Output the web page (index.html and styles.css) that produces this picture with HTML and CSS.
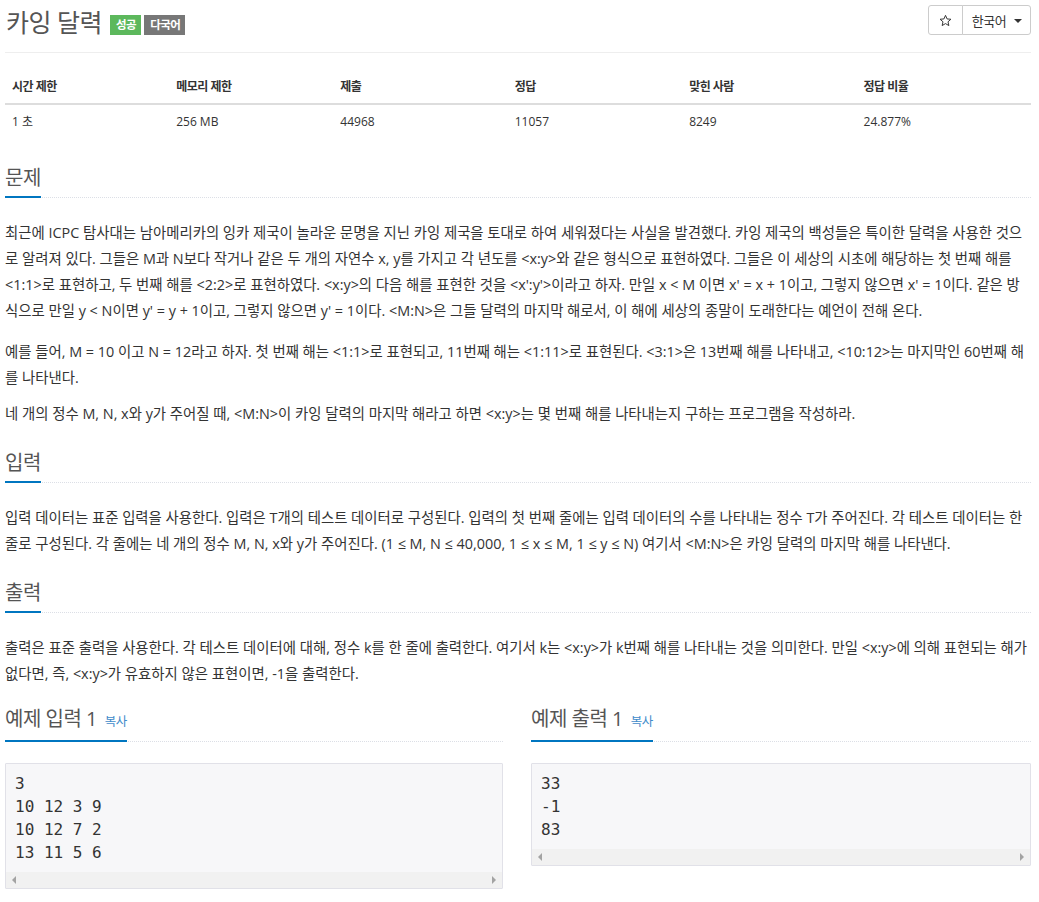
FILE: index.html
```html
<!DOCTYPE html>
<html lang="ko">
<head>
<meta charset="utf-8">
<title>카잉 달력</title>
<link rel="stylesheet" href="styles.css">
</head>
<body>
<div class="container">
  <div class="page-header">
    <h1 class="title"><span class="title-text">카잉 달력</span><span class="label label-success">성공</span><span class="label label-default">다국어</span></h1>
    <div class="btn-group">
      <button class="btn btn-star"><svg width="13" height="13" viewBox="0 0 24 24"><path d="M12 2.5l2.9 6.6 7.1.6-5.4 4.7 1.6 7-6.2-3.7-6.2 3.7 1.6-7L2 9.7l7.1-.6z" fill="none" stroke="#333" stroke-width="1.8" stroke-linejoin="round"/></svg></button>
      <button class="btn btn-lang">한국어 <span class="caret"></span></button>
    </div>
  </div>

  <table class="info-table">
    <thead>
      <tr><th class="w16">시간 제한</th><th class="w16">메모리 제한</th><th class="w17">제출</th><th class="w17">정답</th><th class="w17">맞힌 사람</th><th class="w17">정답 비율</th></tr>
    </thead>
    <tbody>
      <tr><td>1 초</td><td>256 MB</td><td>44968</td><td>11057</td><td>8249</td><td>24.877%</td></tr>
    </tbody>
  </table>

  <section class="problem-section">
    <div class="headline"><h2>문제</h2></div>
    <div class="problem-text">
      <p>최근에 ICPC 탐사대는 남아메리카의 잉카 제국이 놀라운 문명을 지닌 카잉 제국을 토대로 하여 세워졌다는 사실을 발견했다. 카잉 제국의 백성들은 특이한 달력을 사용한 것으로 알려져 있다. 그들은 M과 N보다 작거나 같은 두 개의 자연수 x, y를 가지고 각 년도를 &lt;x:y&gt;와 같은 형식으로 표현하였다. 그들은 이 세상의 시초에 해당하는 첫 번째 해를 &lt;1:1&gt;로 표현하고, 두 번째 해를 &lt;2:2&gt;로 표현하였다. &lt;x:y&gt;의 다음 해를 표현한 것을 &lt;x':y'&gt;이라고 하자. 만일 x &lt; M 이면 x' = x + 1이고, 그렇지 않으면 x' = 1이다. 같은 방식으로 만일 y &lt; N이면 y' = y + 1이고, 그렇지 않으면 y' = 1이다. &lt;M:N&gt;은 그들 달력의 마지막 해로서, 이 해에 세상의 종말이 도래한다는 예언이 전해 온다.</p>
      <p>예를 들어, M = 10 이고 N = 12라고 하자. 첫 번째 해는 &lt;1:1&gt;로 표현되고, 11번째 해는 &lt;1:11&gt;로 표현된다. &lt;3:1&gt;은 13번째 해를 나타내고, &lt;10:12&gt;는 마지막인 60번째 해를 나타낸다.</p>
      <p>네 개의 정수 M, N, x와 y가 주어질 때, &lt;M:N&gt;이 카잉 달력의 마지막 해라고 하면 &lt;x:y&gt;는 몇 번째 해를 나타내는지 구하는 프로그램을 작성하라.</p>
    </div>
  </section>

  <section class="problem-section">
    <div class="headline"><h2>입력</h2></div>
    <div class="problem-text">
      <p>입력 데이터는 표준 입력을 사용한다. 입력은 T개의 테스트 데이터로 구성된다. 입력의 첫 번째 줄에는 입력 데이터의 수를 나타내는 정수 T가 주어진다. 각 테스트 데이터는 한 줄로 구성된다. 각 줄에는 네 개의 정수 M, N, x와 y가 주어진다. (1 ≤ M, N ≤ 40,000, 1 ≤ x ≤ M, 1 ≤ y ≤ N) 여기서 &lt;M:N&gt;은 카잉 달력의 마지막 해를 나타낸다.</p>
    </div>
  </section>

  <section class="problem-section">
    <div class="headline"><h2>출력</h2></div>
    <div class="problem-text">
      <p>출력은 표준 출력을 사용한다. 각 테스트 데이터에 대해, 정수 k를 한 줄에 출력한다. 여기서 k는 &lt;x:y&gt;가 k번째 해를 나타내는 것을 의미한다. 만일 &lt;x:y&gt;에 의해 표현되는 해가 없다면, 즉, &lt;x:y&gt;가 유효하지 않은 표현이면, -1을 출력한다.</p>
    </div>
  </section>

  <div class="samples">
    <section class="sample">
      <div class="headline"><h2>예제 입력 1 <a class="copy">복사</a></h2></div>
      <div class="sample-box">
        <pre class="sampledata">3
10 12 3 9
10 12 7 2
13 11 5 6</pre>
        <div class="hscroll"><span class="arrow-left"></span><span class="arrow-right"></span></div>
      </div>
    </section>
    <section class="sample">
      <div class="headline"><h2>예제 출력 1 <a class="copy">복사</a></h2></div>
      <div class="sample-box">
        <pre class="sampledata">33
-1
83</pre>
        <div class="hscroll"><span class="arrow-left"></span><span class="arrow-right"></span></div>
      </div>
    </section>
  </div>
</div>
</body>
</html>
```
FILE: styles.css
```css
* { box-sizing: border-box; }
html, body { margin: 0; padding: 0; background: #fff; }
body {
  font-family: "Open Sans", "Noto Sans CJK KR", sans-serif;
  font-size: 14px;
  color: #333;
}
.container { padding: 0 8px 0 5px; }

/* header */
.page-header {
  display: flex;
  justify-content: space-between;
  align-items: flex-start;
  padding-top: 5px;
  height: 53px;
  border-bottom: 1px solid #eee;
}
.title {
  display: flex;
  align-items: flex-start;
  margin: 0;
  font-weight: normal;
}
.title-text {
  font-size: 25px;
  line-height: 34px;
  letter-spacing: -0.5px;
  color: #555;
  padding-left: 1px;
}
.label {
  display: inline-block;
  height: 20px;
  line-height: 20px;
  margin-top: 10px;
  padding: 0 5px 0 6px;
  font-size: 11.5px;
  font-weight: bold;
  letter-spacing: -0.5px;
  color: #fff;
}
.label-success { background: #5cb85c; margin-left: 8px; }
.label-default { background: #777; margin-left: 3px; }

.btn-group { display: flex; }
.btn {
  height: 30px;
  background: #fff;
  border: 1px solid #ccc;
  font-family: inherit;
  font-size: 13px;
  color: #333;
  padding: 0;
  display: flex;
  align-items: center;
  justify-content: center;
}
.btn-star { width: 35px; border-radius: 3px 0 0 3px; }
.btn-lang {
  width: 69px;
  margin-left: -1px;
  border-radius: 0 3px 3px 0;
  letter-spacing: -0.5px;
  gap: 8px;
  padding-left: 1px;
}
.caret {
  display: inline-block;
  width: 0;
  height: 0;
  border-left: 4px solid transparent;
  border-right: 4px solid transparent;
  border-top: 4px solid #333;
  margin-top: 2px;
}

/* table */
.info-table {
  width: 100%;
  border-collapse: collapse;
  margin-top: 16px;
  font-size: 12px;
}
.info-table th, .info-table td {
  text-align: left;
  padding: 8px 7px;
  line-height: 17px;
}
.info-table th {
  padding-top: 9px;
  font-weight: bold;
  letter-spacing: -0.5px;
  border-bottom: 2px solid #ddd;
}
.w16 { width: 16%; }
.w17 { width: 17%; }

/* sections */
.problem-section { margin-top: 27px; }
.problem-section + .problem-section { margin-top: 23px; }
.headline {
  display: flex;
  border-bottom: 1px dotted #dcdfe6;
  margin-bottom: 22px;
}
.headline h2 {
  margin: 0 0 -1px;
  font-size: 20px;
  line-height: 26px;
  font-weight: normal;
  letter-spacing: -0.5px;
  color: #555;
  padding-bottom: 5px;
  border-bottom: 2px solid #0076c0;
}
.problem-text p {
  margin: 0 0 10px;
  font-size: 14.4px;
  line-height: 26px;
}
.problem-text p:first-child { margin-bottom: 15px; }
.problem-text p:last-child { margin-bottom: 0; }

/* samples */
.samples {
  display: grid;
  grid-template-columns: 498px 500px;
  column-gap: 28px;
  margin-top: 19px;
}
.sample .headline { margin-bottom: 21px; }
.copy {
  font-size: 12.5px;
  letter-spacing: -0.3px;
  color: #428bca;
  margin-left: 3px;
}
.sample-box {
  border: 1px solid #e1e1e8;
  background: #f7f7f9;
  border-radius: 1px;
}
.sampledata {
  margin: 0;
  padding: 8px 9px 8px;
  font-family: "DejaVu Sans Mono", monospace;
  font-size: 16px;
  line-height: 23px;
  color: #333;
}
.hscroll {
  height: 16px;
  background: #f1f1f1;
  display: flex;
  justify-content: space-between;
  align-items: center;
  padding: 0 6px;
}
.arrow-left, .arrow-right {
  width: 0;
  height: 0;
  border-top: 4px solid transparent;
  border-bottom: 4px solid transparent;
}
.arrow-left { border-right: 4px solid #a3a3a3; }
.arrow-right { border-left: 4px solid #a3a3a3; }
```
